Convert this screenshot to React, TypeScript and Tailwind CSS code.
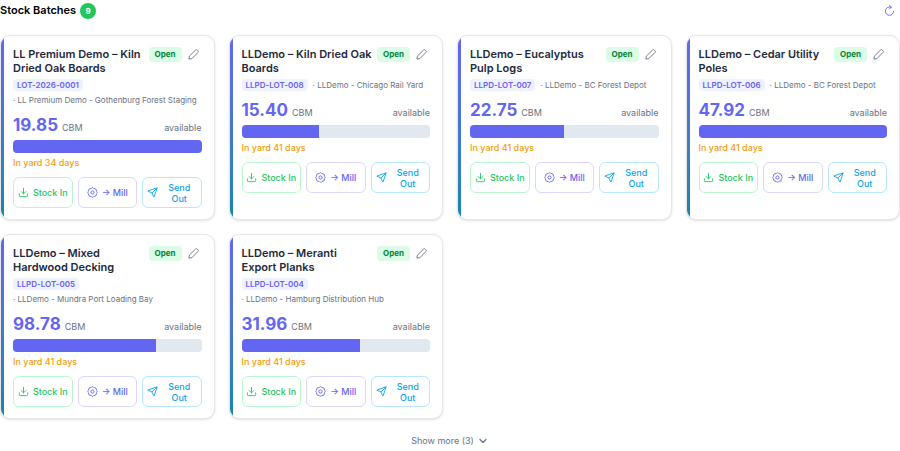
import type { ReactNode } from "react";
import { ChevronDown, Download, Send } from "lucide-react";

type Batch = {
  name: string;
  code: string;
  location: string;
  volume: string;
  // share of the original volume still in the yard, in percent
  remaining: number;
  days: number;
};

const batches: Batch[] = [
  {
    name: "LL Premium Demo – Kiln Dried Oak Boards",
    code: "LOT-2026-0001",
    location: "LL Premium Demo - Gothenburg Forest Staging",
    volume: "19.85",
    remaining: 100,
    days: 34,
  },
  {
    name: "LLDemo – Kiln Dried Oak Boards",
    code: "LLPD-LOT-008",
    location: "LLDemo - Chicago Rail Yard",
    volume: "15.40",
    remaining: 41,
    days: 41,
  },
  {
    name: "LLDemo – Eucalyptus Pulp Logs",
    code: "LLPD-LOT-007",
    location: "LLDemo - BC Forest Depot",
    volume: "22.75",
    remaining: 50,
    days: 41,
  },
  {
    name: "LLDemo – Cedar Utility Poles",
    code: "LLPD-LOT-006",
    location: "LLDemo - BC Forest Depot",
    volume: "47.92",
    remaining: 100,
    days: 41,
  },
  {
    name: "LLDemo – Mixed Hardwood Decking",
    code: "LLPD-LOT-005",
    location: "LLDemo - Mundra Port Loading Bay",
    volume: "98.78",
    remaining: 76,
    days: 41,
  },
  {
    name: "LLDemo – Meranti Export Planks",
    code: "LLPD-LOT-004",
    location: "LLDemo - Hamburg Distribution Hub",
    volume: "31.96",
    remaining: 63,
    days: 41,
  },
];

const PencilIcon = () => (
  <svg viewBox="0 0 24 24" className="size-[11px]" fill="none" stroke="currentColor" strokeWidth="2" strokeLinejoin="round">
    <path d="M2 22l1-6.500L16.500 2.300a2.600 2.600 0 0 1 3.700 0l1.500 1.500a2.600 2.600 0 0 1 0 3.700L8.500 21z" />
  </svg>
);

const RefreshIcon = () => (
  <svg viewBox="0 0 24 24" className="size-[11px]" fill="none" stroke="currentColor" strokeWidth="2" strokeLinecap="round" strokeLinejoin="round">
    <path d="M21 13.500a9 9 0 1 1-9-9h3.500" />
    <path d="M12 1l4 3.500-4 4" />
  </svg>
);

const GearIcon = () => (
  <svg viewBox="0 0 24 24" className="size-[11px] shrink-0" fill="none" stroke="currentColor" strokeWidth="2" strokeLinejoin="round">
    <path d="M20.300 15.400A3.900 3.900 0 0 1 15.400 20.300A3.900 3.900 0 0 1 8.600 20.300A3.900 3.900 0 0 1 3.700 15.400A3.900 3.900 0 0 1 3.700 8.600A3.900 3.900 0 0 1 8.600 3.700A3.900 3.900 0 0 1 15.400 3.700A3.900 3.900 0 0 1 20.300 8.600A3.900 3.900 0 0 1 20.300 15.400z" />
    <circle cx="12" cy="12" r="3.500" />
  </svg>
);

const ActionButton = ({
  className,
  icon,
  children,
}: {
  className: string;
  icon: ReactNode;
  children: ReactNode;
}) => (
  <button
    type="button"
    className={`flex h-[31px] items-center justify-center gap-1 rounded-md border px-1 text-[9px] leading-[11px] font-medium whitespace-nowrap ${className}`}
  >
    {icon}
    {children}
  </button>
);

const BatchCard = ({ batch }: { batch: Batch }) => (
  <article className="relative overflow-hidden rounded-[10px] border border-gray-200 bg-white px-3 py-[11px] shadow-sm">
    <div className="absolute inset-y-0 left-0 w-[3px] bg-linear-to-b from-[#6366f1] to-[#0e86a8]"></div>
    <div className="flex items-start justify-between gap-1">
      <h3 className="text-[11px] leading-[14px] font-semibold text-slate-800">
        {batch.name}
      </h3>
      <div className="flex shrink-0 items-center gap-[6px] pr-[3px]">
        <span className="rounded bg-green-100 px-[6px] text-[8px] leading-[15px] font-bold text-green-700">
          Open
        </span>
        <button type="button" aria-label="Edit batch" className="text-gray-500">
          <PencilIcon />
        </button>
      </div>
    </div>
    <div className="mt-1 flex flex-wrap items-center gap-x-[5px] gap-y-[3px] text-[8px] leading-3 text-gray-500">
      <span className="rounded-sm bg-indigo-50 px-1 font-semibold text-[#6d5ff0]">
        {batch.code}
      </span>
      <span>· {batch.location}</span>
    </div>
    <div className="mt-2 flex items-baseline text-[9px] text-gray-500">
      <strong className="mr-1 text-[17px] leading-[22px] font-bold text-[#6366f1]">
        {batch.volume}
      </strong>
      CBM
      <span className="ml-auto">available</span>
    </div>
    <div className="mt-1 h-[13px] overflow-hidden rounded-sm bg-slate-200">
      <div className="h-full bg-[#6366f1]" style={{ width: `${batch.remaining}%` }}></div>
    </div>
    <p className="mt-1 text-[9px] leading-[11px] font-medium text-[#f59e0b]">
      In yard {batch.days} days
    </p>
    <div className="mt-[9px] grid grid-cols-3 gap-[5px]">
      <ActionButton
        className="border-green-200 text-[#22c55e]"
        icon={<Download className="size-[11px] shrink-0" strokeWidth={2} />}
      >
        Stock In
      </ActionButton>
      <ActionButton
        className="border-violet-200 text-[#6366f1]"
        icon={<GearIcon />}
      >
        → Mill
      </ActionButton>
      <ActionButton
        className="border-sky-200 text-[#0ea5e9]"
        icon={<Send className="size-[11px] shrink-0" strokeWidth={2} />}
      >
        <span className="flex-1">
          Send
          <br />
          Out
        </span>
      </ActionButton>
    </div>
  </article>
);

const App = () => {
  return (
    <main className="bg-white font-['Inter',sans-serif]">
      <header className="flex h-[21px] items-center gap-1">
        <h2 className="text-[11px] font-semibold text-black">Stock Batches</h2>
        <span className="flex size-4 items-center justify-center rounded-full bg-[#22c55e] text-[8px] font-bold text-white">
          9
        </span>
        <button type="button" aria-label="Refresh" className="mr-[5px] ml-auto text-[#6366f1]">
          <RefreshIcon />
        </button>
      </header>
      <section className="mt-[14px] grid grid-cols-4 gap-[14px]">
        {batches.map((batch) => (
          <BatchCard key={batch.code} batch={batch} />
        ))}
      </section>
      <div className="mt-[15px] flex justify-center">
        <button type="button" className="flex items-center gap-[3px] text-[9px] leading-[14px] text-slate-500">
          Show more (3)
          <ChevronDown className="size-3" strokeWidth={2.5} />
        </button>
      </div>
    </main>
  );
};

export default App;
